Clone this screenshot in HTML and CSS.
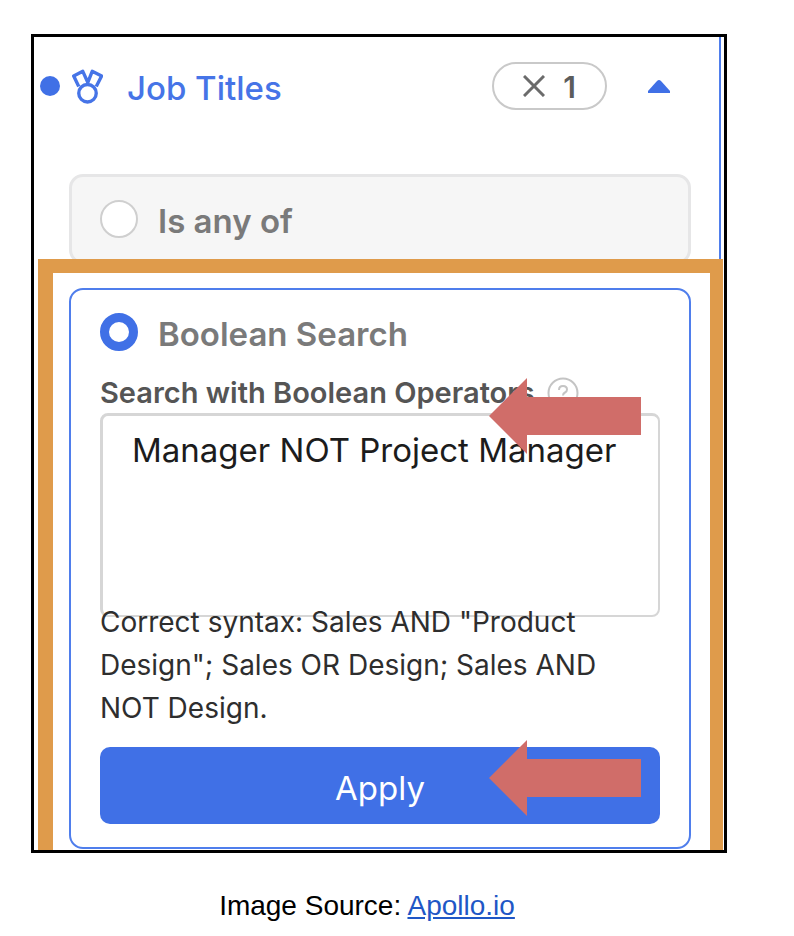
FILE: index.html
```html
<!DOCTYPE html>
<html lang="en">
<head>
<meta charset="utf-8">
<meta name="viewport" content="width=device-width, initial-scale=1">
<title>Job Titles filter</title>
<link rel="stylesheet" href="styles.css">
</head>
<body>
<figure class="figure">
  <div class="frame">
    <section class="filter">
      <header class="filter-header">
        <span class="dot"></span>
        <svg class="medal" viewBox="0 0 92 104" aria-hidden="true">
          <path d="M20 52 5 21 32 7 47 40 60 7 88 21 72 52"/>
          <circle cx="46" cy="72" r="26"/>
        </svg>
        <h1 class="title">Job Titles</h1>
        <button class="pill" type="button" aria-label="Clear 1 filter">
          <svg class="cross" viewBox="0 0 22 22" aria-hidden="true"><path d="M1 1 21 21M21 1 1 21"/></svg>
          <span class="count">1</span>
        </button>
        <button class="toggle" type="button" aria-label="Collapse">
          <svg class="caret" viewBox="0 0 22 13" aria-hidden="true"><path d="M0 13v-2L9 1q2-2 4 0l9 10v2z"/></svg>
        </button>
      </header>
      <div class="option option-any">
        <label class="choice"><input class="radio" type="radio" name="mode"><span class="choice-text">Is any of</span></label>
      </div>
    </section>
    <section class="highlight">
      <div class="option option-boolean">
        <label class="choice"><input class="radio" type="radio" name="mode" checked><span class="choice-text">Boolean Search</span></label>
        <div class="field">
          <div class="field-label">
            <label for="query">Search with Boolean Operators</label>
            <svg class="help" viewBox="0 0 32 32" aria-hidden="true">
              <circle cx="16" cy="16" r="14.5"/>
              <path d="M12 13q0-4 4-4t4 3.500q0 2-2 3t-2 3"/>
              <path d="M16 21v2.500"/>
            </svg>
          </div>
          <textarea class="query" id="query">Manager NOT Project Manager</textarea>
          <svg class="arrow" viewBox="0 0 152 76" aria-hidden="true"><path d="M0 38 38 0V19H152V57H38V76z"/></svg>
        </div>
        <p class="syntax">Correct syntax: Sales AND "Product Design"; Sales OR Design; Sales AND NOT Design.</p>
        <div class="action">
          <button class="apply" type="button">Apply</button>
          <svg class="arrow" viewBox="0 0 152 76" aria-hidden="true"><path d="M0 38 38 0V19H152V57H38V76z"/></svg>
        </div>
      </div>
    </section>
  </div>
  <figcaption class="caption">Image Source: <a href="#">Apollo.io</a></figcaption>
</figure>
</body>
</html>
```
FILE: styles.css
```css
* {
  box-sizing: border-box;
}

body {
  margin: 0;
  background: #fff;
  font-family: Inter, "Liberation Sans", sans-serif;
}

button {
  font: inherit;
  cursor: pointer;
}

.figure {
  margin: 34px 67px 0 31px;
}

.frame {
  border: 3px solid #000;
}

.filter {
  margin-right: 3px;
  border-right: 2px solid #4f7eec;
}

.filter-header {
  display: flex;
  align-items: center;
  padding: 25px 49px 64px 6px;
}

.dot {
  width: 20px;
  height: 20px;
  border-radius: 50%;
  background: #4070e6;
}

.medal {
  width: 31px;
  height: 35px;
  margin-left: 12px;
  fill: none;
  stroke: #4674e7;
  stroke-width: 10;
  stroke-linejoin: round;
}

.title {
  flex: 1;
  margin: 0 0 0 24px;
  padding-top: 4px;
  font-size: 33px;
  line-height: 44px;
  font-weight: 500;
  color: #4674e7;
}

.pill {
  display: flex;
  align-items: center;
  justify-content: center;
  gap: 18px;
  width: 115px;
  height: 48px;
  padding: 0;
  border: 2px solid #c9c9c9;
  border-radius: 24px;
  background: #fff;
  font-size: 30px;
  font-weight: 600;
  color: #5c5c5c;
}

.count {
  padding-top: 2px;
}

.cross {
  width: 22px;
  height: 22px;
  fill: none;
  stroke: #6b6b6b;
  stroke-width: 3;
}

.toggle {
  display: flex;
  margin-left: 41px;
  padding: 0;
  border: 0;
  background: none;
}

.caret {
  width: 22px;
  height: 13px;
  fill: #4070e6;
}

.option {
  border-radius: 14px;
}

.option-any {
  margin: 0 28px 0 35px;
  padding: 23px 28px 23px 28px;
  border: 3px solid #e6e6e7;
  background: #f6f6f6;
}

.choice {
  display: flex;
  align-items: center;
  gap: 20px;
  font-size: 33px;
  line-height: 34px;
  font-weight: 600;
  color: #7a7a7a;
}

.choice-text {
  padding-top: 4px;
}

.radio {
  appearance: none;
  width: 38px;
  height: 38px;
  margin: 0;
  border: 2px solid #cfcfcf;
  border-radius: 50%;
  background: #fff;
}

.radio:checked {
  border: 9px solid #4070e6;
}

.highlight {
  position: relative;
  margin: -5px 1px 0 4px;
  padding: 15px 19px 1px 16px;
  border: solid #df9b4b;
  border-width: 14px 13px 0 15px;
  background: #fff;
}

.option-boolean {
  padding: 23px 29px;
  border: 2px solid #4f7eec;
}

.field {
  position: relative;
  margin-top: 26px;
}

.field-label {
  display: flex;
  align-items: center;
  gap: 12px;
  margin-bottom: 4px;
  font-size: 29px;
  line-height: 32px;
  font-weight: 600;
  color: #555;
}

.help {
  width: 32px;
  height: 32px;
  fill: none;
  stroke: #c4c4c4;
  stroke-width: 2;
}

.query {
  display: block;
  width: 100%;
  height: 204px;
  padding: 14px 20px 14px 29px;
  border: solid #d6d6d6;
  border-width: 3px 2px 2px 3px;
  border-radius: 8px;
  background: #fff;
  font: 400 33px/40px Inter, "Liberation Sans", sans-serif;
  color: #1c1c1c;
  resize: none;
  overflow: hidden;
}

.syntax {
  position: relative;
  margin: -16px 0 17px;
  font-size: 28px;
  line-height: 43px;
  color: #2e2e2e;
}

.action {
  position: relative;
}

.apply {
  display: block;
  width: 100%;
  height: 77px;
  padding: 4px 0 0;
  border: 0;
  border-radius: 10px;
  background: #4070e6;
  font-size: 33px;
  color: #fff;
}

.arrow {
  position: absolute;
  right: 19px;
  width: 152px;
  height: 76px;
  fill: #d06d69;
}

.field .arrow {
  top: 1px;
}

.action .arrow {
  top: -7px;
}

.caption {
  margin-top: 36px;
  padding-right: 24px;
  text-align: center;
  font: 28px/34px "Liberation Sans", Arial, sans-serif;
  color: #000;
}

.caption a {
  color: #1f57c6;
}
```
